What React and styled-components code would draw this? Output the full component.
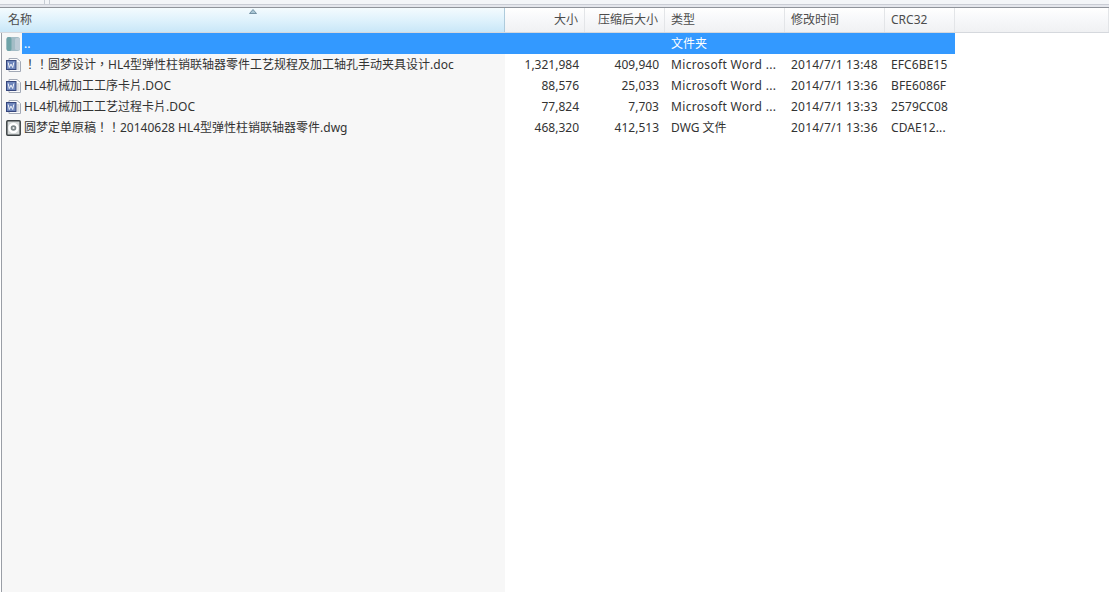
import React from "react"
import styled, { createGlobalStyle } from "styled-components"

const GlobalStyle = createGlobalStyle`
    html, body {
        margin: 0;
        padding: 0;
        height: 100%;
        background: #fff;
        overflow: hidden;
    }
    #root {
        height: 100%;
    }
`

const columns = "505px 80px 80px 120px 100px 70px"

const Window = styled.div`
    display: flex;
    flex-direction: column;
    width: 1109px;
    height: 592px;
    overflow: hidden;
    font-family: "Noto Sans", "Noto Sans CJK TC", sans-serif;
    font-size: 12px;
    color: #333;
`

const TopStrip = styled.div`
    display: flex;
    flex: none;
    height: 4px;
    background: #f3f5f8;
`

const StripTab = styled.div`
    width: ${(p) => p.$width}px;
    border-right: 1px solid #c6ccd4;
`

const Divider = styled.div`
    flex: none;
    height: 2px;
    background: #e4e6ec;
    border-top: 1px solid #c9ccd4;
    border-bottom: 1px solid #8f939a;
`

const Body = styled.div`
    position: relative;
    display: flex;
    flex: 1;
    flex-direction: column;
    margin-left: 1px;
    border-left: 1px solid #9a9ea6;
    background: linear-gradient(to right, #f7f7f7 503px, #fff 503px);
`

const HeaderRow = styled.div`
    display: grid;
    grid-template-columns: ${columns} 1fr;
    flex: none;
    height: 24px;
    margin-left: -2px;
    background: linear-gradient(to bottom, #ffffff 0%, #f7f8fa 45%, #f0f1f3 100%);
    border-bottom: 1px solid #d5d8dd;
`

const HeaderCell = styled.div`
    display: flex;
    align-items: center;
    justify-content: ${(p) => (p.$right ? "flex-end" : "flex-start")};
    padding: ${(p) => (p.$right ? "0 6px 2px 0" : "0 0 2px 6px")};
    border-right: 1px solid #e3e5e8;
    color: #4c4c4c;
    white-space: nowrap;
`

const NameHeader = styled(HeaderCell)`
    position: relative;
    padding-left: 8px;
    background: linear-gradient(to bottom, #f4fbfe 0%, #dff2fc 50%, #c9e7f8 100%);
    border-right: 1px solid #aecbdc;
`

const SortArrow = styled.svg`
    position: absolute;
    top: 1px;
    left: 249px;
    width: 8px;
    height: 5px;
`

const Row = styled.div`
    display: grid;
    grid-template-columns: ${columns};
    width: 955px;
    height: 21px;
    margin-left: -2px;
    line-height: 21px;
    white-space: nowrap;
`

const NameCell = styled.div`
    display: flex;
    align-items: center;
    gap: 1px;
    padding-left: 6px;
    min-width: 0;
`

const NameText = styled.span`
    display: flex;
    flex: 1;
    align-self: stretch;
    align-items: center;
    padding-left: 2px;
    color: ${(p) => (p.$selected ? "#fff" : "#333")};
    background: ${(p) => (p.$selected ? "#3399ff" : "transparent")};
`

const Cell = styled.div`
    padding: ${(p) => (p.$right ? "0 6px 0 0" : "0 0 0 6px")};
    overflow: hidden;
    color: ${(p) => (p.$selected ? "#fff" : "#333")};
    background: ${(p) => (p.$selected ? "#3399ff" : "transparent")};
    letter-spacing: ${(p) => p.$tracking || 0}px;
    text-align: ${(p) => (p.$right ? "right" : "left")};
`

const FolderIcon = () => (
    <svg width="15" height="16" viewBox="0 0 15 16">
        <rect x="0.5" y="1" width="13.5" height="14" rx="2.5" fill="#a3bcc6" />
        <rect x="0.5" y="1" width="5" height="14" rx="2" fill="#6fa3a8" />
        <rect x="9" y="2" width="5" height="12" rx="1.5" fill="#bccbd6" />
    </svg>
)

const WordIcon = () => (
    <svg width="15" height="16" viewBox="0 0 15 16">
        <path d="M3 1.5h8l3.5 3v10H3z" fill="#fbfbfc" stroke="#a2a9b6" />
        <path d="M11 6h2.5M11 8h2.5M11 10h2.5M11 12h2.5" stroke="#b4bac6" />
        <rect x="0.5" y="3.5" width="9.5" height="9" fill="#6f86bc" stroke="#36467c" />
        <path d="M2.2 5.5l1.1 5 1.7-3.4 1.7 3.4 1.1-5" fill="none" stroke="#f2f4fa" strokeWidth="1" />
    </svg>
)

const DwgIcon = () => (
    <svg width="15" height="16" viewBox="0 0 15 16">
        <rect x="0.8" y="0.8" width="13.4" height="14.4" rx="1" fill="#d4d8d8" stroke="#3c4244" strokeWidth="1.5" />
        <circle cx="7.5" cy="8" r="5.2" fill="#fff" />
        <circle cx="7.5" cy="8" r="2.8" fill="#7b8587" />
        <circle cx="7.5" cy="8" r="1.1" fill="#eceeee" />
    </svg>
)

const files = [
    {
        icon: <WordIcon />,
        name: "！！圆梦设计，HL4型弹性柱销联轴器零件工艺规程及加工轴孔手动夹具设计.doc",
        size: "1,321,984",
        packed: "409,940",
        type: "Microsoft Word ...",
        time: "2014/7/1 13:48",
        crc: "EFC6BE15",
    },
    {
        icon: <WordIcon />,
        name: "HL4机械加工工序卡片.DOC",
        size: "88,576",
        packed: "25,033",
        type: "Microsoft Word ...",
        time: "2014/7/1 13:36",
        crc: "BFE6086F",
    },
    {
        icon: <WordIcon />,
        name: "HL4机械加工工艺过程卡片.DOC",
        size: "77,824",
        packed: "7,703",
        type: "Microsoft Word ...",
        time: "2014/7/1 13:33",
        crc: "2579CC08",
    },
    {
        icon: <DwgIcon />,
        name: "圆梦定单原稿！！20140628 HL4型弹性柱销联轴器零件.dwg",
        size: "468,320",
        packed: "412,513",
        type: "DWG 文件",
        time: "2014/7/1 13:36",
        crc: "CDAE12...",
    },
]

const App = () => {
    return (
        <Window>
            <GlobalStyle />
            <TopStrip>
                <StripTab $width={44} />
                <StripTab $width={4} />
            </TopStrip>
            <Divider />
            <Body>
                <HeaderRow>
                    <NameHeader>
                        名称
                        <SortArrow viewBox="0 0 8 5">
                            <path d="M0.5 4.5L4 0.5l3.5 4z" fill="#a9c6d4" stroke="#5f8296" strokeWidth="0.8" />
                        </SortArrow>
                    </NameHeader>
                    <HeaderCell $right>大小</HeaderCell>
                    <HeaderCell $right>压缩后大小</HeaderCell>
                    <HeaderCell>类型</HeaderCell>
                    <HeaderCell>修改时间</HeaderCell>
                    <HeaderCell>CRC32</HeaderCell>
                    <HeaderCell />
                </HeaderRow>
                <Row>
                    <NameCell>
                        <FolderIcon />
                        <NameText $selected>..</NameText>
                    </NameCell>
                    <Cell $selected $right />
                    <Cell $selected $right />
                    <Cell $selected>文件夹</Cell>
                    <Cell $selected />
                    <Cell $selected />
                </Row>
                {files.map((file) => (
                    <Row key={file.crc}>
                        <NameCell>
                            {file.icon}
                            <NameText>{file.name}</NameText>
                        </NameCell>
                        <Cell $right>{file.size}</Cell>
                        <Cell $right>{file.packed}</Cell>
                        <Cell $tracking={file.type.length > 10 ? 0.33 : 0}>{file.type}</Cell>
                        <Cell $tracking={0.2}>{file.time}</Cell>
                        <Cell $tracking={0.1}>{file.crc}</Cell>
                    </Row>
                ))}
            </Body>
        </Window>
    )
}

export default App
